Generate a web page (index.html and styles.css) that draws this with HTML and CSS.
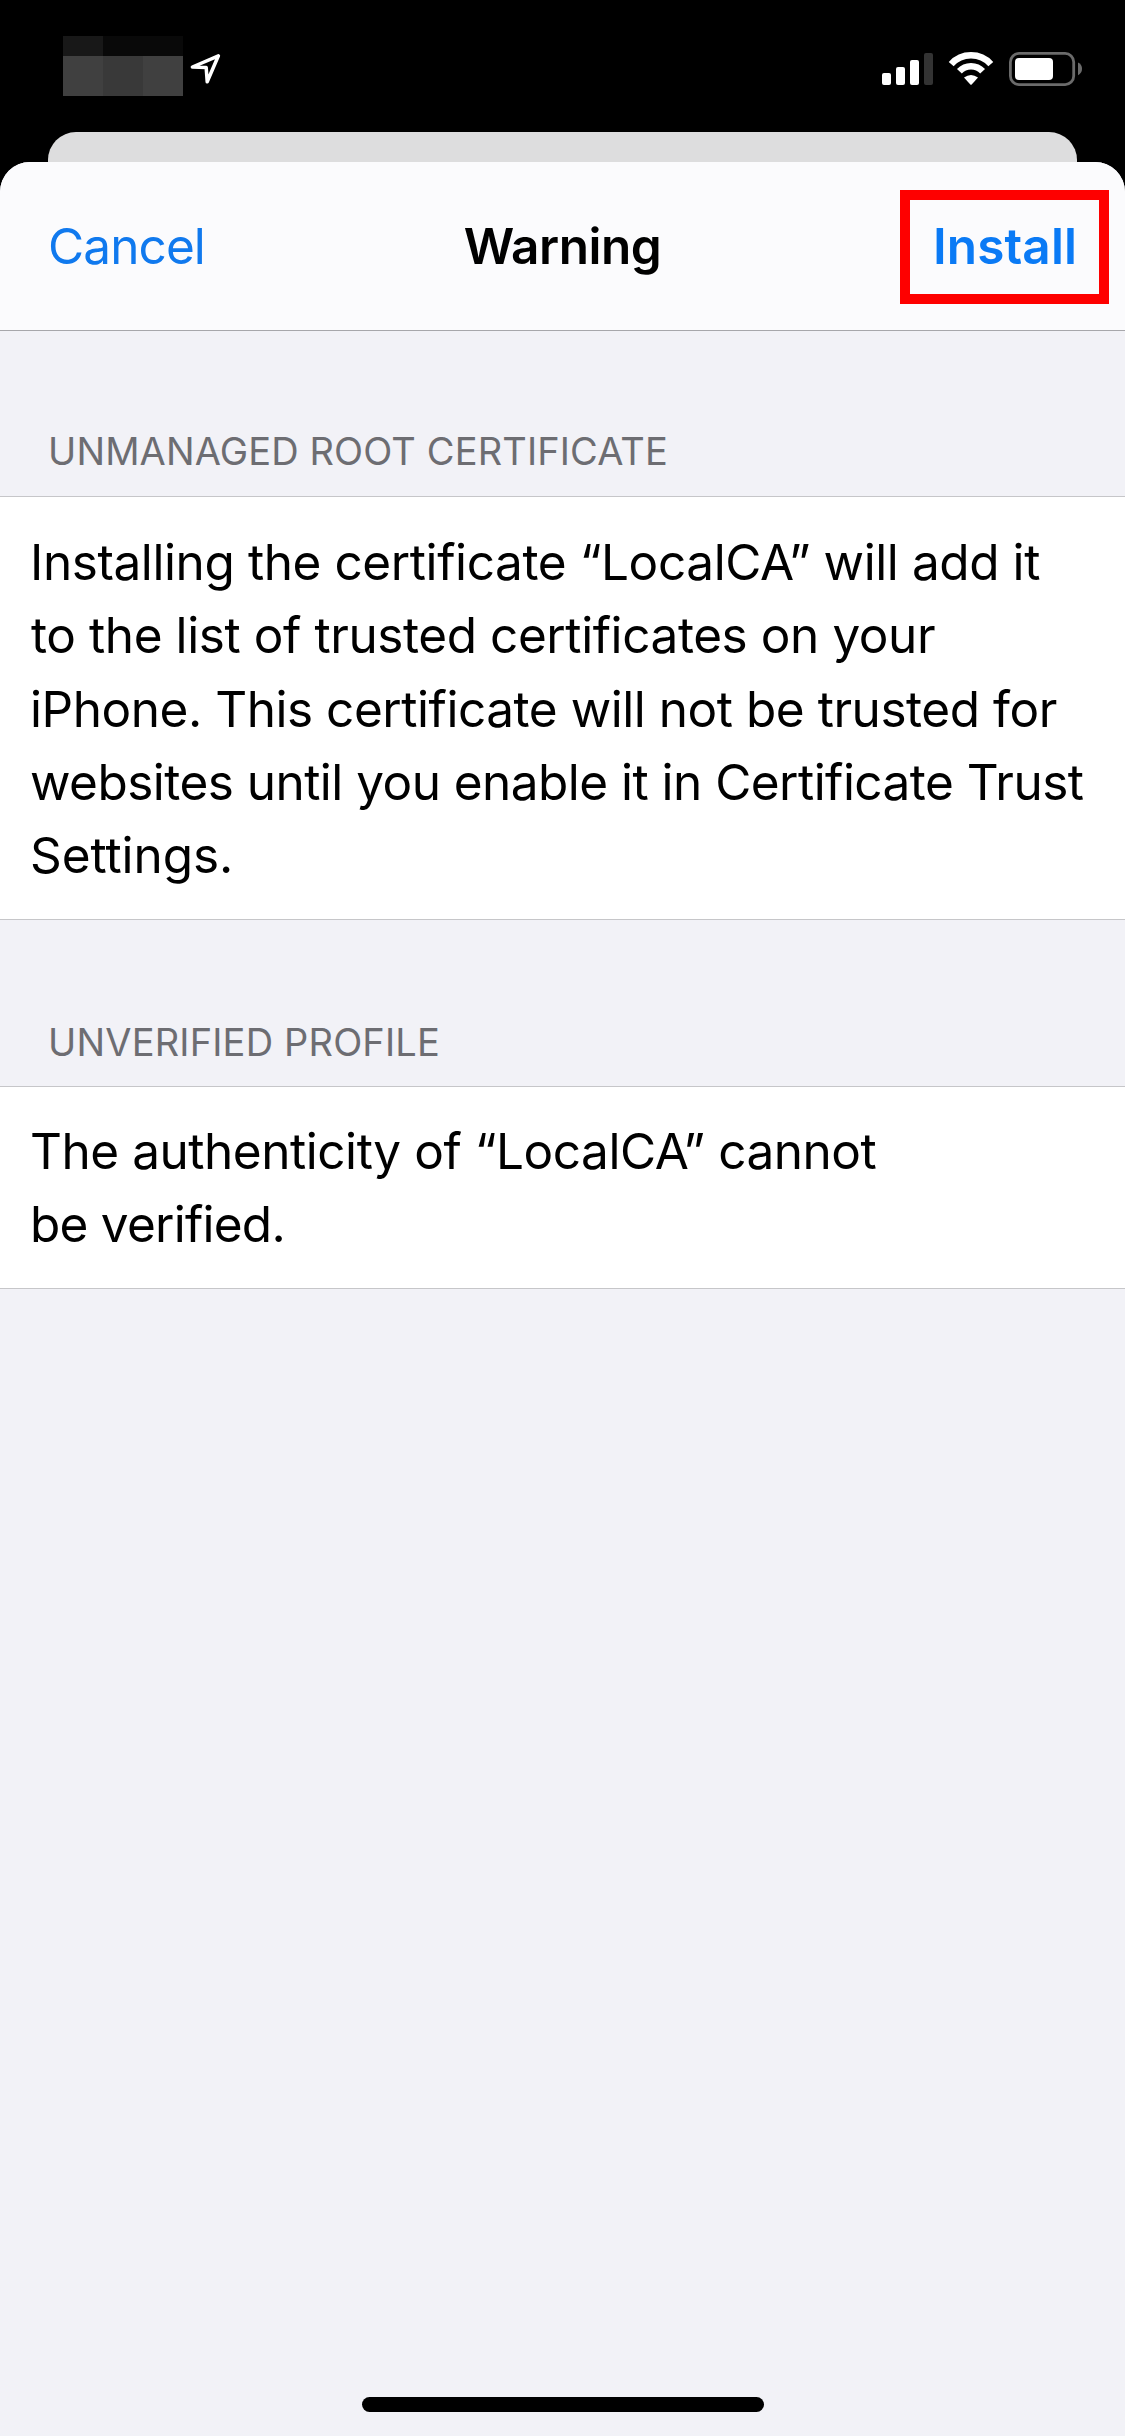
FILE: index.html
```html
<!DOCTYPE html>
<html lang="en">
<head>
<meta charset="utf-8">
<title>Warning</title>
<link rel="stylesheet" href="styles.css">
</head>
<body>
<div class="screen">
  <header class="status">
    <div class="status-left">
      <div class="clock"><i class="c1"></i><i class="c2"></i><i class="c2"></i><i class="c3"></i><i class="c4"></i><i class="c3"></i></div>
      <svg class="location" width="36" height="36" viewBox="188 50 36 36" fill="none" stroke="#fff" stroke-width="3.5" stroke-linejoin="round"><path d="M218.4 55.8L192.4 67L206.2 67.6L207.2 81.8Z"/></svg>
    </div>
    <div class="status-right">
      <svg width="52" height="32" viewBox="882 53 52 32" fill="#fff"><rect x="882" y="73" width="9" height="12" rx="2"/><rect x="896" y="67" width="9" height="18" rx="2"/><rect x="910" y="60" width="9" height="25" rx="2"/><rect x="924" y="53" width="9" height="32" rx="2" fill="#333"/></svg>
      <svg class="wifi" width="46" height="34" viewBox="948 52 46 34" fill="none" stroke="#fff" stroke-width="6.6"><path d="M951.2 64.1A26.7 26.7 0 0 1 990.8 64.1"/><path d="M959.4 71.3A15.8 15.8 0 0 1 982.6 71.3"/><path d="M964 77.6Q971 72.4 978 77.6L971.7 84.5Q971 85.2 970.3 84.5Z" fill="#fff" stroke="none"/></svg>
      <svg class="battery" width="73" height="34" viewBox="1009 52 73 34"><rect x="1010.4" y="53.4" width="63.3" height="31.2" rx="8.6" fill="none" stroke="#6b6b6b" stroke-width="2.8"/><rect x="1015" y="58" width="38" height="22" rx="4" fill="#fff"/><path d="M1078 62.5Q1082 64.3 1082 68.8T1078 75.2Z" fill="#6b6b6b"/></svg>
    </div>
  </header>
  <div class="back-card"></div>
  <main class="sheet">
    <nav class="bar">
      <a class="cancel">Cancel</a>
      <h1 class="title">Warning</h1>
      <a class="install">Install</a>
      <div class="highlight"></div>
    </nav>
    <h2 class="label">UNMANAGED ROOT CERTIFICATE</h2>
    <p class="cell"><span class="t1">Installing the certificate “LocalCA” will add it</span><span class="t2">to the list of trusted certificates on your</span><span class="t3">iPhone. This certificate will not be trusted for</span><span class="t4">websites until you enable it in Certificate Trust</span><span class="t5">Settings.</span></p>
    <h2 class="label label-second">UNVERIFIED PROFILE</h2>
    <p class="cell cell-second"><span class="t6">The authenticity of “LocalCA” cannot</span><span class="t7">be verified.</span></p>
    <div class="home"></div>
  </main>
</div>
</body>
</html>
```
FILE: styles.css
```css
* { box-sizing: border-box; margin: 0; padding: 0; }
body { background: #000; font-family: Inter, "Liberation Sans", sans-serif; font-size: 49.5px; color: #000; }
svg { display: block; flex: none; }
.screen { width: 1125px; height: 2436px; display: flex; flex-direction: column; overflow: hidden; }

.status { height: 132px; padding: 36px 43px 0 63px; display: flex; justify-content: space-between; }
.status-left, .status-right { display: flex; align-items: flex-start; }
.clock { display: grid; grid-template: 20px 40px / 40px 40px 40px; }
.c1 { background: #181818; }
.c2 { background: #090909; }
.c3 { background: #404040; }
.c4 { background: #393939; }
.location { margin: 14px 0 0 5px; }
.status-right { padding-top: 16px; }
.status-right svg:first-child { margin-top: 1px; }
.wifi { margin-left: 14px; }
.battery { margin-left: 15px; }

.back-card { height: 30px; margin: 0 48px; background: #ddddde; border-radius: 28px 28px 0 0; }
.sheet { flex: 1; display: flex; flex-direction: column; background: #f2f2f7; border-radius: 30px 30px 0 0; }
.bar { position: relative; height: 169px; padding: 54px 48px 0 48px; display: grid; grid-template-columns: 1fr auto 1fr; align-items: start; line-height: 60px; background: #fbfbfd; border-bottom: 1px solid #a7a7ab; border-radius: 30px 30px 0 0; }
.cancel { color: #1079ee; letter-spacing: -.9px; }
.title { font-size: inherit; font-weight: 600; letter-spacing: -.5px; }
.install { color: #0a7af5; font-weight: 600; text-align: right; letter-spacing: .1px; }
.highlight { position: absolute; left: 900px; top: 28px; width: 209px; height: 114px; border: 10px solid #fe0000; }

.label { padding: 97px 48px 22px; font-size: 38px; line-height: 46px; font-weight: 400; color: #6d6d72; letter-spacing: .123px; }
.label-second { padding: 99px 48px 21px; letter-spacing: .169px; }
.cell { height: 424px; padding: 29px 0 0 30px; background: #fff; border: solid #c6c6c9; border-width: 1px 0; line-height: 73.33px; }
.cell-second { height: 203px; padding-top: 28px; }
.cell span { display: block; white-space: nowrap; }
.t1 { letter-spacing: -.41px; }
.t2 { letter-spacing: -.42px; padding-left: 1px; }
.t3 { letter-spacing: -.46px; }
.t4 { letter-spacing: -.53px; }
.t5 { letter-spacing: -.05px; }
.t6 { letter-spacing: -.46px; }
.t7 { letter-spacing: -.75px; }
.home { width: 402px; height: 15px; margin: auto auto 24px 362px; background: #000; border-radius: 8px; }
```
